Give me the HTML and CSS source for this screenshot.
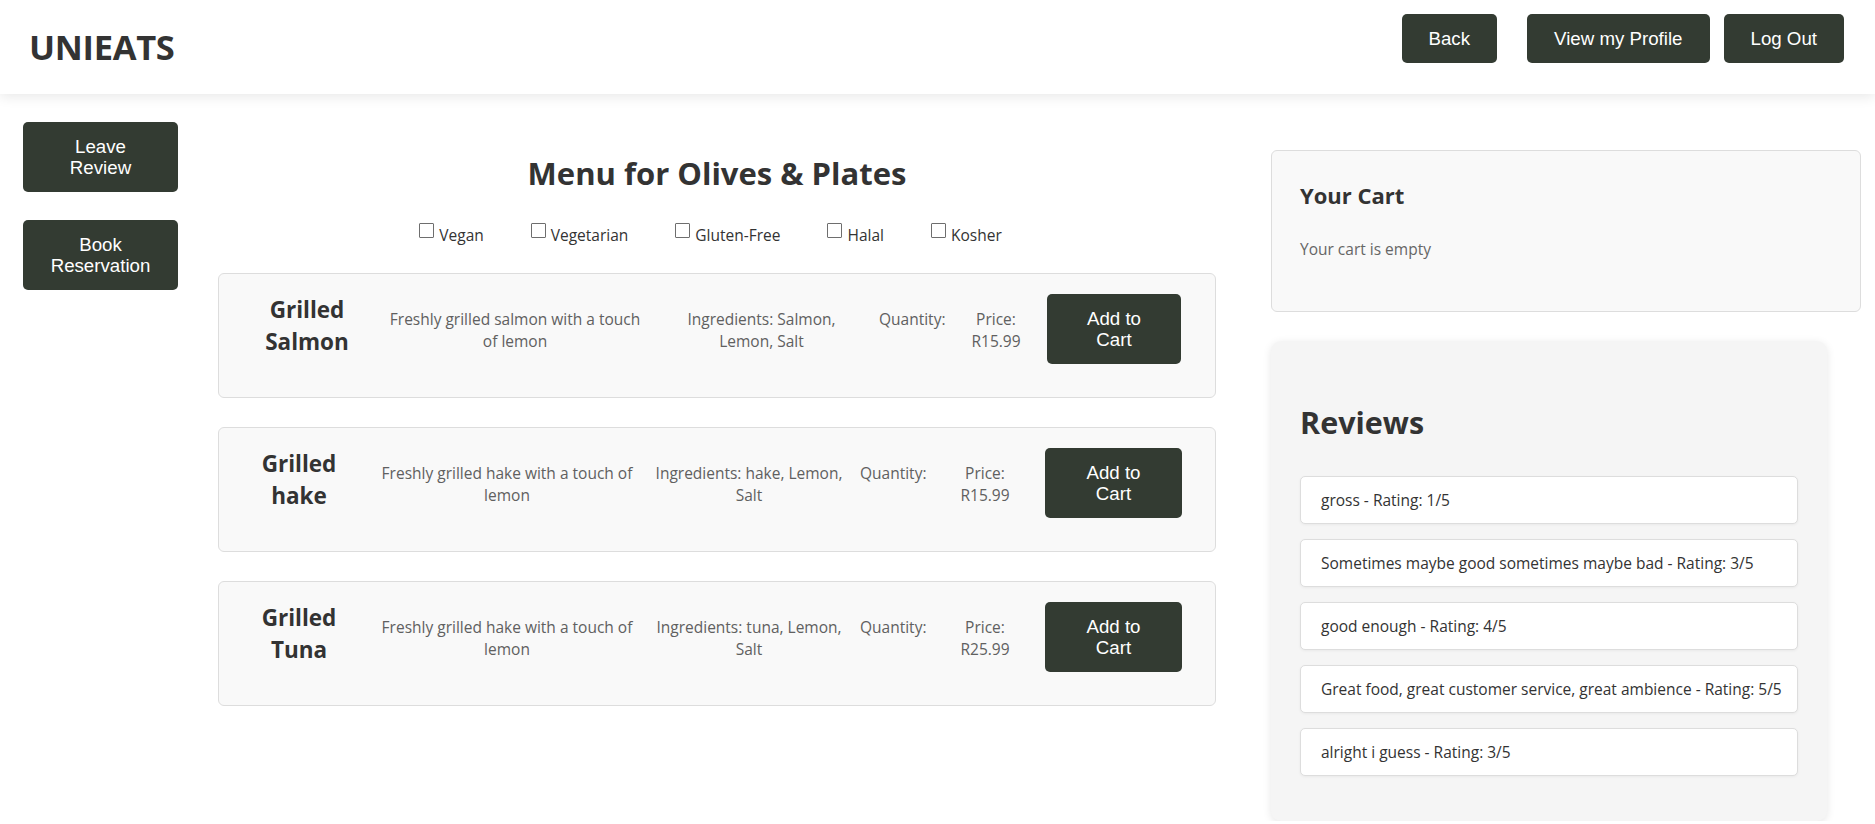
FILE: index.html
```html
<!DOCTYPE html>
<html lang="en">
<head>
<meta charset="utf-8">
<title>UNIEATS - Menu</title>
<link rel="stylesheet" href="styles.css">
</head>
<body>
<header class="topbar">
  <h1 class="brand">UNIEATS</h1>
  <nav class="topnav">
    <button class="btn btn-back">Back</button>
    <button class="btn">View my Profile</button>
    <button class="btn">Log Out</button>
  </nav>
</header>

<div class="layout">
  <aside class="sidebar">
    <button class="btn side-btn">Leave Review</button>
    <button class="btn side-btn">Book Reservation</button>
  </aside>

  <main class="menu">
    <h2 class="menu-title">Menu for Olives &amp; Plates</h2>
    <div class="filters">
      <label class="filter"><input type="checkbox">Vegan</label>
      <label class="filter"><input type="checkbox">Vegetarian</label>
      <label class="filter"><input type="checkbox">Gluten-Free</label>
      <label class="filter"><input type="checkbox">Halal</label>
      <label class="filter"><input type="checkbox">Kosher</label>
    </div>

    <div class="dish">
      <h3 class="dish-name">Grilled Salmon</h3>
      <p class="dish-desc">Freshly grilled salmon with a touch of lemon</p>
      <p class="dish-ingr">Ingredients: Salmon, Lemon, Salt</p>
      <p class="dish-qty">Quantity:</p>
      <p class="dish-price">Price: R15.99</p>
      <button class="btn add-btn">Add to Cart</button>
    </div>

    <div class="dish dish--alt">
      <h3 class="dish-name">Grilled hake</h3>
      <p class="dish-desc">Freshly grilled hake with a touch of lemon</p>
      <p class="dish-ingr">Ingredients: hake, Lemon, Salt</p>
      <p class="dish-qty">Quantity:</p>
      <p class="dish-price">Price: R15.99</p>
      <button class="btn add-btn">Add to Cart</button>
    </div>

    <div class="dish dish--alt">
      <h3 class="dish-name">Grilled Tuna</h3>
      <p class="dish-desc">Freshly grilled hake with a touch of lemon</p>
      <p class="dish-ingr">Ingredients: tuna, Lemon, Salt</p>
      <p class="dish-qty">Quantity:</p>
      <p class="dish-price">Price: R25.99</p>
      <button class="btn add-btn">Add to Cart</button>
    </div>
  </main>

  <section class="right-col">
    <div class="cart">
      <h3 class="cart-title">Your Cart</h3>
      <p class="cart-empty">Your cart is empty</p>
    </div>

    <div class="reviews">
      <h2 class="reviews-title">Reviews</h2>
      <div class="review">gross - Rating: 1/5</div>
      <div class="review">Sometimes maybe good sometimes maybe bad - Rating: 3/5</div>
      <div class="review">good enough - Rating: 4/5</div>
      <div class="review">Great food, great customer service, great ambience - Rating: 5/5</div>
      <div class="review">alright i guess - Rating: 3/5</div>
    </div>
  </section>
</div>
</body>
</html>
```

FILE: styles.css
```css
* {
  box-sizing: border-box;
}

html, body {
  margin: 0;
  padding: 0;
  overflow: hidden;
}

body {
  font-family: "Open Sans", "Noto Sans", sans-serif;
  font-size: 15.5px;
  line-height: 22px;
  color: #333;
  background: #fff;
}

/* ---------- buttons ---------- */
.btn {
  font-family: "Liberation Sans", Arial, sans-serif;
  font-size: 18.7px;
  line-height: 21px;
  color: #fff;
  background: #333b32;
  border: none;
  border-radius: 5px;
  padding: 14px 27px;
  cursor: pointer;
}

/* ---------- header ---------- */
.topbar {
  height: 94px;
  display: flex;
  align-items: center;
  justify-content: space-between;
  padding: 0 31px 0 29px;
  background: #fff;
  box-shadow: 0 3px 12px rgba(0, 0, 0, 0.09);
  position: relative;
  z-index: 1;
}

.brand {
  margin: 0;
  font-size: 34.5px;
  line-height: 46px;
  font-weight: 700;
  color: #333;
  letter-spacing: -0.3px;
}

.topnav {
  align-self: flex-start;
  margin-top: 14px;
  display: flex;
  gap: 14px;
}

.btn-back {
  margin-right: 16px;
}

/* ---------- layout ---------- */
.layout {
  display: flex;
  align-items: flex-start;
  padding: 28px 14px 0 23px;
}

.sidebar {
  width: 155px;
  flex: none;
  display: flex;
  flex-direction: column;
  gap: 28px;
  margin-right: 40px;
}

.side-btn {
  width: 155px;
  padding: 14px 26px;
}

/* ---------- menu ---------- */
.menu {
  width: 998px;
  flex: none;
}

.menu-title {
  margin: 30px 0 0;
  text-align: center;
  font-size: 31px;
  line-height: 42px;
  font-weight: 700;
  color: #333;
}

.filters {
  display: flex;
  justify-content: center;
  height: 22px;
  margin: 29px 0 28px;
  line-height: 22px;
}

.filter {
  margin: 0 30px 0 13px;
  color: #333;
  white-space: nowrap;
}

.filter input {
  -webkit-appearance: none;
  appearance: none;
  width: 15px;
  height: 15px;
  margin: 0 5px 0 4px;
  border: 1.3px solid #6e6e6e;
  border-radius: 1px;
  background: #fff;
  vertical-align: 3px;
}

.dish {
  display: flex;
  align-items: flex-start;
  padding: 20px 36px 20px 33px;
  margin-bottom: 29px;
  background: #f9f9f9;
  border: 1px solid #ddd;
  border-radius: 6px;
  text-align: center;
}

.dish > * {
  flex: none;
}

.dish p {
  margin-top: 14px;
  margin-bottom: 0;
  color: #606060;
}

.dish-name {
  width: 110px;
  margin: 0 0 19px;
  font-size: 22.5px;
  line-height: 32px;
  font-weight: 700;
  color: #333;
}

.dish-desc {
  width: 258px;
  margin-left: 24px;
}

.dish-ingr {
  width: 187px;
  margin-left: 24px;
}

.dish-qty {
  width: 66px;
  margin-left: 24px;
}

.dish-price {
  width: 54px;
  margin-left: 24px;
}

.add-btn {
  width: 134px;
  margin-left: 24px;
  padding: 14px 28px;
}

/* narrower-name cards shift their columns left, as in the original */
.dish--alt .dish-name {
  width: 94px;
}

.dish--alt .dish-desc {
  margin-left: 32px;
}

.dish--alt .dish-ingr {
  width: 190px;
  margin-left: 18px;
}

.dish--alt .dish-qty {
  margin-left: 16px;
}

.dish--alt .dish-price {
  margin-left: 32px;
}

.dish--alt .add-btn {
  width: 137px;
  margin-left: 33px;
}

/* ---------- right column ---------- */
.right-col {
  width: 590px;
  flex: none;
  margin-left: 55px;
}

.cart {
  margin-top: 28px;
  padding: 28px;
  background: #f9f9f9;
  border: 1px solid #ddd;
  border-radius: 6px;
}

.cart-title {
  margin: 1px 0 28px;
  font-size: 22px;
  line-height: 30px;
  font-weight: 700;
  color: #333;
}

.cart-empty {
  margin: 0 0 23px;
  color: #666;
}

.reviews {
  width: 556px;
  margin-top: 29px;
  padding: 30px 29px;
  background: #f5f5f5;
  border-radius: 10px;
  box-shadow: 0 2px 8px rgba(0, 0, 0, 0.1);
}

.reviews-title {
  margin: 30px 0 33px;
  font-size: 30.5px;
  line-height: 42px;
  font-weight: 700;
  color: #333;
}

.review {
  padding: 12px 12px 12px 20px;
  margin-bottom: 15px;
  background: #fff;
  border: 1px solid #ddd;
  border-radius: 5px;
  box-shadow: 0 1px 3px rgba(0, 0, 0, 0.05);
  color: #333;
  white-space: nowrap;
}
```
